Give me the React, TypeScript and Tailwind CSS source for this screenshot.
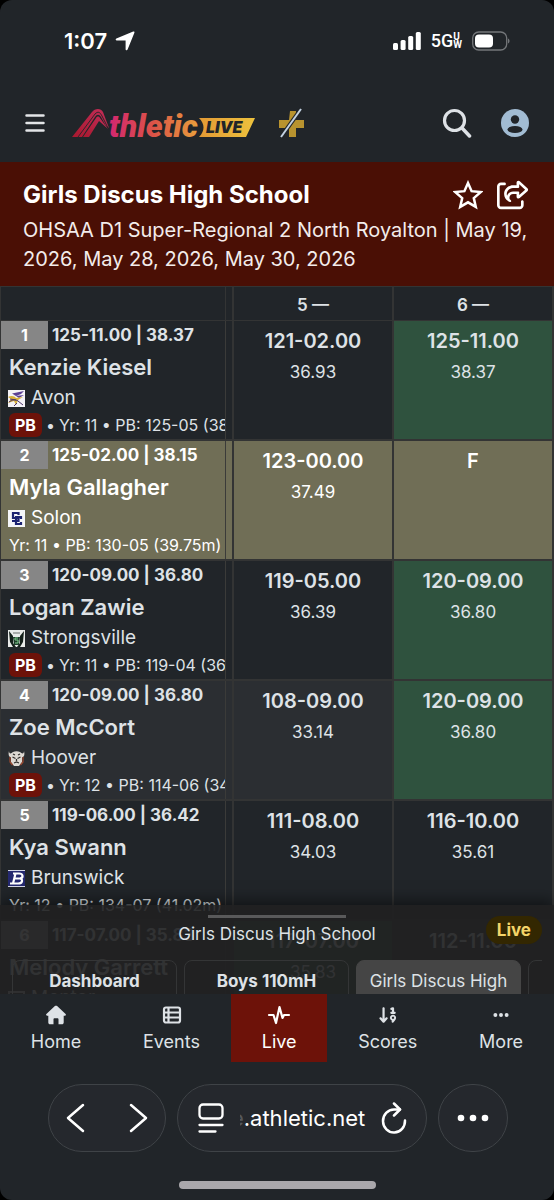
import { ReactNode } from "react";
import clsx from "clsx";
import {
  FaArrowDown19,
  FaEllipsis,
  FaRegShareFromSquare,
} from "react-icons/fa6";

interface Attempt {
  mark: string;
  metric?: string;
  best?: boolean;
}

interface Athlete {
  rank: number;
  mark: string;
  name: string;
  team: string;
  logo: ReactNode;
  info: string;
  pb?: boolean;
  attempts: Attempt[];
}

const logos = {
  avon: (
    <svg viewBox="0 0 17 17" className="size-[17px] shrink-0" aria-hidden="true">
      <rect width="17" height="17" fill="#f4f2f6" />
      <path d="M4 3.500 16 1l-3 3-5 2ZM8 6l8-1-5 3Z" fill="#5b3f93" />
      <path d="M0 7c3-2 7-1 8 1l7-1-5 3-2 5-2-4-6 2 3-4Z" fill="#d9b23a" />
      <path d="M1 12c3-2 6-3 9-1l5 4M2 9l6 1M9 13l-3 3" stroke="#4b3268" fill="none" />
    </svg>
  ),
  solon: (
    <svg viewBox="0 0 17 17" className="size-[17px] shrink-0" aria-hidden="true">
      <rect width="17" height="17" fill="#f5f6fa" />
      <path
        d="M10.500 5V3H5v5h5.500v3H4M13 9V7H8v7h5v-2"
        stroke="#1b2272"
        strokeWidth="2.2"
        fill="none"
      />
    </svg>
  ),
  strongsville: (
    <svg viewBox="0 0 17 17" className="size-[17px] shrink-0" aria-hidden="true">
      <rect width="17" height="17" fill="#e9ebe9" />
      <path d="M1 1 5 6v7l3 4H5L2 12ZM16 1l-4 5v7l-3 4h3l3-5Z" fill="#14201a" />
      <path d="M5 2h7v2H5Z" fill="#a9adaa" />
      <path d="M5 7h7l-1 8H6Z" fill="#1e3b2a" />
      <path d="M10 8H7v2h3v3H7" stroke="#7ed08c" fill="none" />
    </svg>
  ),
  hoover: (
    <svg viewBox="0 0 17 17" className="size-[17px] shrink-0" aria-hidden="true">
      <path
        d="M1 1c0 3 2 3 4 1 2-1 5-1 7 0 2 2 4 2 4-1 1 4 0 6-2 6.500V12l-3 4H6l-3-4V7.500C1 7 0 5 1 1Z"
        fill="#ded9d3"
      />
      <path d="M2 7v5l2.500 3M15 7v5l-2.500 3" stroke="#a14a30" strokeWidth="1.200" fill="none" />
      <path d="m4.500 7 3 1.500M12.500 7l-3 1.500M8.500 9v2M6 13l2.500-1 2.500 1M5 4l2 1M12 4l-2 1" stroke="#33302f" strokeWidth="1.300" fill="none" />
    </svg>
  ),
  brunswick: (
    <svg viewBox="0 0 17 17" className="size-[17px] shrink-0" aria-hidden="true">
      <rect width="17" height="17" fill="#24286f" />
      <path d="M0 .5h17M0 16.500h17" stroke="#d5d7e6" />
      <path
        d="M2 13.500h8c5 0 5-4.500 2-5 4-1 3-5-1-5H5M7.500 3.500 5 13.500M6 8.500h6"
        stroke="#fff"
        strokeWidth="2.200"
        fill="none"
      />
    </svg>
  ),
  mentor: (
    <svg viewBox="0 0 17 17" className="size-[17px] shrink-0" aria-hidden="true">
      <path d="M1 2h15v13H11V7H1Z" fill="none" stroke="#c9c9c9" strokeWidth="2" />
    </svg>
  ),
};

const athletes: Athlete[] = [
  {
    rank: 1,
    mark: "125-11.00 | 38.37",
    name: "Kenzie Kiesel",
    team: "Avon",
    logo: logos.avon,
    info: "Yr: 11 • PB: 125-05 (38",
    pb: true,
    attempts: [
      { mark: "121-02.00", metric: "36.93" },
      { mark: "125-11.00", metric: "38.37", best: true },
    ],
  },
  {
    rank: 2,
    mark: "125-02.00 | 38.15",
    name: "Myla Gallagher",
    team: "Solon",
    logo: logos.solon,
    info: "Yr: 11 • PB: 130-05 (39.75m)",
    attempts: [{ mark: "123-00.00", metric: "37.49" }, { mark: "F" }],
  },
  {
    rank: 3,
    mark: "120-09.00 | 36.80",
    name: "Logan Zawie",
    team: "Strongsville",
    logo: logos.strongsville,
    info: "Yr: 11 • PB: 119-04 (36",
    pb: true,
    attempts: [
      { mark: "119-05.00", metric: "36.39" },
      { mark: "120-09.00", metric: "36.80", best: true },
    ],
  },
  {
    rank: 4,
    mark: "120-09.00 | 36.80",
    name: "Zoe McCort",
    team: "Hoover",
    logo: logos.hoover,
    info: "Yr: 12 • PB: 114-06 (34",
    pb: true,
    attempts: [
      { mark: "108-09.00", metric: "33.14" },
      { mark: "120-09.00", metric: "36.80", best: true },
    ],
  },
  {
    rank: 5,
    mark: "119-06.00 | 36.42",
    name: "Kya Swann",
    team: "Brunswick",
    logo: logos.brunswick,
    info: "Yr: 12 • PB: 134-07 (41.02m)",
    attempts: [
      { mark: "111-08.00", metric: "34.03" },
      { mark: "116-10.00", metric: "35.61" },
    ],
  },
  {
    rank: 6,
    mark: "117-07.00 | 35.83",
    name: "Melody Garrett",
    team: "Mentor",
    logo: logos.mentor,
    info: "Yr: 12",
    attempts: [
      { mark: "117-07.00", metric: "35.83", best: true },
      { mark: "112-11.00" },
    ],
  },
];

// rank of the athlete currently in the ring
const CURRENT = 2;

function StatusBar() {
  return (
    <div className="flex h-[82px] items-center justify-between pr-11 pl-16 text-white">
      <div className="flex items-center gap-2">
        <span className="text-[22px] font-semibold">1:07</span>
        <svg viewBox="0 0 20 20" className="size-5" fill="currentColor" aria-hidden="true">
          <path d="M18.200.6c.9-.3 1.500.3 1.200 1.200L12.600 18.600c-.5 1.100-2 .9-2-.4V9.400H1.800C.5 9.400.3 7.900 1.400 7.400Z" />
        </svg>
      </div>
      <div className="flex items-center gap-2.5">
        <svg viewBox="0 0 28 18" className="h-[18px] w-7" fill="currentColor" aria-hidden="true">
          <rect x="0" y="11" width="5" height="7" rx="1.500" />
          <rect x="7.600" y="8" width="5" height="10" rx="1.500" />
          <rect x="15.200" y="4" width="5" height="14" rx="1.500" />
          <rect x="22.800" y="0" width="5" height="18" rx="1.500" />
        </svg>
        <span className="flex items-center">
          <span className="font-[Roboto,sans-serif] text-lg font-medium">5G</span>
          <span className="font-[Roboto,sans-serif] text-[10px] leading-2 font-bold">
            U<br />W
          </span>
        </span>
        <svg viewBox="0 0 38 20" className="h-5 w-[38px]" aria-hidden="true">
          <rect x=".7" y="1" width="34" height="18" rx="6" fill="none" stroke="#74777a" strokeWidth="1.300" />
          <rect x="3" y="3.500" width="18" height="13" rx="4" fill="#fff" />
          <path d="M36 7.500c2 .8 2 4.200 0 5Z" fill="#74777a" />
        </svg>
      </div>
    </div>
  );
}

function Logo() {
  return (
    <svg viewBox="0 0 184 32" className="h-8 w-[184px]" role="img" aria-label="Athletic LIVE">
      <defs>
        <linearGradient id="word" gradientUnits="userSpaceOnUse" x1="38" y1="0" x2="128" y2="0">
          <stop offset="0" stopColor="#d3286f" />
          <stop offset=".5" stopColor="#dc5546" />
          <stop offset="1" stopColor="#e9a23c" />
        </linearGradient>
        <linearGradient id="mark" x1="0" y1="1" x2="1" y2="0">
          <stop offset="0" stopColor="#a8192f" />
          <stop offset="1" stopColor="#c32d58" />
        </linearGradient>
        <linearGradient id="plate" x1="0" y1="0" x2="1" y2="0">
          <stop offset="0" stopColor="#e39a35" />
          <stop offset="1" stopColor="#edc23d" />
        </linearGradient>
      </defs>
      <path
        d="M0 30 20 5C23 1 29 1 31 5l6 16-3-2-5-9c-2-3-4-3-6 0L10 30Z"
        fill="url(#mark)"
      />
      <path d="M11 30 24 11c1-2 3-2 4 0l8 11-9-8L17 30Z" fill="url(#mark)" />
      <path d="M6 30 23 7c3-3 5-2 7 2l6 12" fill="none" stroke="#212529" strokeWidth=".9" />
      <path d="M127 11h56l-9 19h-47c6-6 6-13 0-19Z" fill="url(#plate)" />
      <text
        x="37"
        y="30"
        fill="url(#word)"
        className="font-[Roboto,sans-serif] text-[32px] font-black italic"
      >
        thletic
      </text>
      <text
        x="134"
        y="26"
        fill="#212529"
        className="font-[Inter,sans-serif] text-base font-black italic"
      >
        LIVE
      </text>
    </svg>
  );
}

function NavBar() {
  return (
    <nav className="flex h-20 items-center px-[25px] pt-0.5">
      <button type="button" aria-label="Menu">
        <svg viewBox="0 0 20 18" className="h-[18px] w-5" stroke="#e3e5e7" strokeWidth="2.500" strokeLinecap="round">
          <path d="M1.500 1.500h17M1.500 9h17M1.500 16.500h17" />
        </svg>
      </button>
      <a href="#home" className="ml-[27px]">
        <Logo />
      </a>
      <a href="#plus" className="ml-[22px]" aria-label="Plus">
        <svg viewBox="0 0 28 32" className="h-8 w-7">
          <path d="M12 4h6v9h8v8h-8v9h-7v-9H1v-8h10Z" fill="#b8932f" />
          <path d="M23 2 3 30" stroke="#212529" strokeWidth="4" />
          <path d="M23 2 3 30" stroke="#c3d2e2" strokeWidth="2" />
        </svg>
      </a>
      <div className="ml-auto flex items-center gap-[29px]">
        <button type="button" aria-label="Search">
          <svg viewBox="0 0 30 30" className="size-[30px]" fill="none" stroke="#dee2e6" strokeLinecap="round">
            <circle cx="12.500" cy="12.500" r="10" strokeWidth="3.200" />
            <path d="m20 20 7.500 8" strokeWidth="3.500" />
          </svg>
        </button>
        <button type="button" aria-label="Account">
          <svg viewBox="0 0 28 28" className="size-7">
            <circle cx="14" cy="14" r="14" fill="#a2bcd3" />
            <circle cx="14" cy="10.500" r="4.200" fill="#212529" />
            <ellipse cx="14" cy="20.500" rx="7.500" ry="3.600" fill="#212529" />
          </svg>
        </button>
      </div>
    </nav>
  );
}

function EventHeader() {
  return (
    <header className="bg-[#4a0f05] px-[23px] pt-4 pb-3 text-white">
      <div className="flex items-center justify-between pr-0.5">
        <h1 className="text-2xl leading-[34px] font-bold">Girls Discus High School</h1>
        <div className="flex items-center gap-3.5">
          <button type="button" aria-label="Favorite">
            <svg viewBox="0 0 30 30" className="size-[30px]" fill="none" stroke="currentColor" strokeWidth="2.500">
              <path d="m15 3 3.600 8.200 9 .9-6.800 6 2 8.800-7.800-4.600-7.800 4.600 2-8.800-6.800-6 9-.9Z" />
            </svg>
          </button>
          <button type="button" aria-label="Share">
            <FaRegShareFromSquare className="size-8" />
          </button>
        </div>
      </div>
      <p className="mt-1 text-xl leading-[29px] text-[#f3eceb]">
        OHSAA D1 Super-Regional 2 North Royalton | May 19, 2026, May 28, 2026,
        May 30, 2026
      </p>
    </header>
  );
}

function AthleteRow({ athlete }: { athlete: Athlete }) {
  const current = athlete.rank === CURRENT;

  return (
    <tr
      className={clsx(
        "h-[120px] align-top",
        current && "bg-[#706e56] text-white",
        !current && athlete.rank % 2 === 0 && "bg-[#2b2e32]",
      )}
    >
      <th
        scope="row"
        className="border-r-2 border-b-2 border-[#333434] pr-1.5 text-left font-normal"
      >
        <div className="overflow-hidden border-r border-[#3b3b39] whitespace-nowrap">
          <div className="flex h-7 items-center gap-1">
            <span className="flex h-7 w-[47px] items-center justify-center bg-[#868686] text-base font-bold text-white">
              {athlete.rank}
            </span>
            <span className="pt-0.5 text-[17px] font-bold">{athlete.mark}</span>
          </div>
          <div className="pl-2 text-[22px] leading-9 font-semibold">
            {athlete.name}
          </div>
          <div className="flex h-[26px] items-center gap-1.5 pl-[7px] text-[19px]">
            {athlete.logo}
            {athlete.team}
          </div>
          <div className="flex h-7 items-center pl-2 text-base">
            {athlete.pb && (
              <>
                <span className="mr-1 rounded-md bg-[#6d1209] px-1.5 text-base leading-6 font-bold text-white">
                  PB
                </span>
                <span className="mr-1">•</span>
              </>
            )}
            <span>{athlete.info}</span>
          </div>
        </div>
      </th>
      {athlete.attempts.map((attempt, index) => (
        <td
          key={index}
          className={clsx(
            "border-r-2 border-b-2 border-[#333434] pt-1.5 text-center",
            attempt.best && "bg-[#2f523e]",
          )}
        >
          <div className="text-xl leading-7 font-semibold">{attempt.mark}</div>
          <div className="mt-[3px] text-[17px] leading-7">{attempt.metric}</div>
        </td>
      ))}
    </tr>
  );
}

function Results() {
  return (
    <table className="w-full table-fixed border-separate border-spacing-0 border-t border-l border-[#333434] text-[#dee2e6]">
      <thead>
        <tr className="h-[34px] text-[17px]">
          <th className="w-[233px] border-r-2 border-b border-[#333434] pr-1.5">
            <div className="h-[33px] border-r border-[#333434]" />
          </th>
          <th className="border-r-2 border-b border-[#333434] pt-1 font-semibold">5 —</th>
          <th className="border-r-2 border-b border-[#333434] pt-1 font-semibold">6 —</th>
        </tr>
      </thead>
      <tbody>
        {athletes.map((athlete) => (
          <AthleteRow key={athlete.rank} athlete={athlete} />
        ))}
      </tbody>
    </table>
  );
}

const tab = "h-12 w-[165px] shrink-0 rounded-lg border pb-1 text-[17px]";

function EventSheet() {
  return (
    <section className="absolute inset-x-0 bottom-0 h-[89px] bg-[#202021]/91 px-3 text-[#dee2e6] shadow-[0_-4px_14px_rgba(0,0,0,0.5)]">
      <div className="mx-auto mt-2.5 h-[3px] w-[138px] bg-[#59595a]" />
      <p className="mt-1 text-center text-[17px] leading-6">Girls Discus High School</p>
      <span className="absolute top-[11px] right-3 rounded-full bg-[#332701] px-[11px] text-[17px] leading-7 font-bold text-[#f4d469]">
        Live
      </span>
      <div className="mt-3.5 flex h-[34px] gap-[7px] overflow-hidden">
        <button type="button" className={clsx(tab, "border-[#343536] font-bold")}>
          Dashboard
        </button>
        <button type="button" className={clsx(tab, "border-[#343536] font-bold")}>
          Boys 110mH
        </button>
        <button type="button" className={clsx(tab, "border-[#454545] bg-[#454545] whitespace-nowrap")}>
          Girls Discus High
        </button>
        <button type="button" aria-label="Next event" className={clsx(tab, "border-[#343536]")} />
      </div>
    </section>
  );
}

const links = [
  {
    label: "Home",
    icon: (
      <svg viewBox="0 0 22 20" className="h-5 w-[22px]" fill="currentColor" aria-hidden="true">
        <path d="M9.900 1.100c.6-.6 1.600-.6 2.200 0l8.500 7.900c.7.700.3 1.700-.7 1.700h-1.200v6.800c0 1.100-.7 1.800-1.800 1.800h-3.400v-5c0-.7-.4-1.100-1.100-1.100H9.600c-.7 0-1.100.4-1.100 1.100v5H5.100c-1.100 0-1.800-.7-1.800-1.800v-6.800H2.100c-1 0-1.400-1-.7-1.700Z" />
      </svg>
    ),
  },
  {
    label: "Events",
    icon: (
      <svg viewBox="0 0 20 20" className="size-5" fill="none" stroke="currentColor" strokeWidth="2.200" aria-hidden="true">
        <rect x="2" y="2.500" width="16" height="15" rx="2" />
        <path d="M6.500 2.500v15M2 7.500h16M2 12.500h16" />
      </svg>
    ),
  },
  {
    label: "Live",
    active: true,
    icon: (
      <svg viewBox="0 0 24 20" className="h-5 w-6" fill="none" stroke="currentColor" strokeWidth="2.200" strokeLinecap="round" strokeLinejoin="round">
        <path d="M2 10h4.500L9 18l3.500-16L15.500 13l1.500-3h5" />
      </svg>
    ),
  },
  { label: "Scores", icon: <FaArrowDown19 className="size-5" /> },
  { label: "More", icon: <FaEllipsis /> },
];

function BottomNav() {
  return (
    <nav className="flex text-[#dee2e6]">
      {links.map(({ label, icon, active }) => (
        <a
          key={label}
          href={`#${label.toLowerCase()}`}
          className={clsx(
            "flex h-[68px] flex-auto flex-col items-center pt-[11px]",
            active && "bg-[#6d1209] text-white",
          )}
        >
          <span className="flex h-5 items-center text-lg">{icon}</span>
          <span className="mt-[3px] text-lg leading-7">{label}</span>
        </a>
      ))}
    </nav>
  );
}

const pill =
  "flex h-[68px] items-center rounded-full border border-[#3f4347] bg-[#25282d]";

function BrowserBar() {
  return (
    <div className="pt-[22px] pb-[11px] text-white">
      <div className="flex gap-[11px] pr-[46px] pl-12">
        <div className={clsx(pill, "w-[118px] justify-between px-[17px]")}>
          <button type="button" aria-label="Back">
            <svg viewBox="0 0 20 30" className="h-[30px] w-5" fill="none" stroke="currentColor" strokeWidth="2.500" strokeLinecap="round" strokeLinejoin="round">
              <path d="M17 2 2 15l15 13" />
            </svg>
          </button>
          <button type="button" aria-label="Forward">
            <svg viewBox="0 0 20 30" className="h-[30px] w-5" fill="none" stroke="currentColor" strokeWidth="2.500" strokeLinecap="round" strokeLinejoin="round">
              <path d="m3 2 15 13L3 28" />
            </svg>
          </button>
        </div>
        <div className={clsx(pill, "flex-1 justify-between pr-[19px] pl-5")}>
          <button type="button" aria-label="Page settings">
            <svg viewBox="0 0 26 30" className="h-[30px] w-[26px]" fill="none" stroke="currentColor" strokeWidth="2.300" strokeLinecap="round">
              <rect x="1.500" y="1.500" width="23" height="14" rx="3.500" />
              <path d="M1.500 22h23M1.500 28.500h16" />
            </svg>
          </button>
          <span className="flex text-[22px]">
            <span className="w-1 overflow-hidden text-[#55585c]">
              <span className="float-right">e</span>
            </span>
            .athletic.net
          </span>
          <button type="button" aria-label="Reload">
            <svg viewBox="0 0 26 32" className="h-8 w-[26px]" fill="none" stroke="currentColor" strokeWidth="2.500" strokeLinecap="round" strokeLinejoin="round">
              <path d="M24 18.500A11 11.500 0 1 1 13 7.500h6" />
              <path d="m13 1.500 6 6-6 6" />
            </svg>
          </button>
        </div>
        <button type="button" aria-label="More" className={clsx(pill, "w-[70px] justify-center")}>
          <svg viewBox="0 0 32 8" className="h-2 w-8" fill="currentColor">
            <circle cx="4" cy="4" r="3.300" />
            <circle cx="16" cy="4" r="3.300" />
            <circle cx="28" cy="4" r="3.300" />
          </svg>
        </button>
      </div>
      <div className="mx-auto mt-[29px] h-2 w-[197px] rounded-full bg-[#a9a7ab]" />
    </div>
  );
}

export default function App() {
  return (
    <div className="h-screen bg-black">
      <div className="flex h-full flex-col overflow-hidden rounded-xl bg-[#212529] font-[Inter,'Liberation_Sans',sans-serif]">
        <StatusBar />
        <NavBar />
        <EventHeader />
        <main className="relative min-h-0 flex-1 overflow-hidden">
          <Results />
          <EventSheet />
        </main>
        <BottomNav />
        <BrowserBar />
      </div>
    </div>
  );
}
